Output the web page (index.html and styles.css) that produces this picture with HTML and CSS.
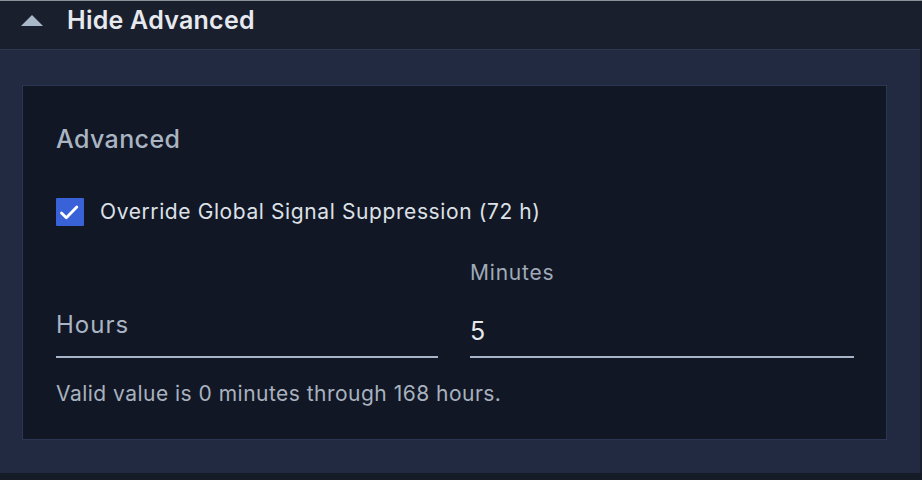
FILE: index.html
```html
<!DOCTYPE html>
<html lang="en">
<head>
<meta charset="utf-8">
<title>Hide Advanced</title>
<link rel="stylesheet" href="styles.css">
</head>
<body>
<div class="page">
  <header class="toggle">
    <svg class="caret" width="22" height="11" viewBox="0 0 22 11" aria-hidden="true"><path d="M11 0 L22 11 L0 11 Z" fill="#a9b8c8"/></svg>
    <span class="toggle-label">Hide Advanced</span>
  </header>
  <section class="panel">
    <div class="card">
      <h2 class="card-title">Advanced</h2>
      <label class="check-row">
        <span class="checkbox">
          <svg width="28" height="28" viewBox="0 0 28 28" aria-hidden="true"><path d="M5.5 15 L10.3 19.8 L20.8 9" fill="none" stroke="#ffffff" stroke-width="2.8" stroke-linecap="round" stroke-linejoin="round"/></svg>
        </span>
        <span class="check-label">Override Global Signal Suppression (72 h)</span>
      </label>
      <div class="fields">
        <div class="field">
          <div class="field-label-top"></div>
          <div class="field-input placeholder">Hours</div>
        </div>
        <div class="field">
          <div class="field-label-top">Minutes</div>
          <div class="field-input">5</div>
        </div>
      </div>
      <p class="helper">Valid value is 0 minutes through 168 hours.</p>
    </div>
  </section>
</div>
</body>
</html>
```
FILE: styles.css
```css
html, body {
  margin: 0;
  padding: 0;
}
body {
  background: #161b28;
  font-family: Inter, "Noto Sans", sans-serif;
  width: 922px;
  height: 480px;
  overflow: hidden;
}
.page {
  background: #1a1f2d;
  border-top: 1px solid #8c9099;
  width: 922px;
}
.toggle {
  height: 48px;
  display: flex;
  align-items: flex-start;
  padding-left: 21px;
  box-sizing: border-box;
}
.caret {
  display: block;
  margin-top: 14px;
}
.toggle-label {
  margin-left: 24px;
  margin-top: 4px;
  color: #e6e9ee;
  font-size: 25px;
  line-height: 30px;
  font-weight: 600;
  letter-spacing: 0.25px;
}
.panel {
  width: 920px;
  box-sizing: border-box;
  background: #212a41;
  border-top: 1px solid #2c3852;
  padding: 35px 33px 33px 22px;
}
.card {
  background: #121726;
  border: 1px solid #2b3752;
  padding: 38px 32px 0 33px;
  height: 355px;
  box-sizing: border-box;
}
.card-title {
  margin: 0;
  font-size: 25px;
  font-weight: 500;
  letter-spacing: 0.4px;
  color: #a9b5c3;
  line-height: 30px;
}
.check-row {
  display: flex;
  align-items: center;
  margin-top: 44px;
  height: 28px;
}
.checkbox {
  width: 28px;
  height: 28px;
  flex: none;
  background: #3a62d8;
  display: flex;
  align-items: center;
  justify-content: center;
  border-radius: 1px;
}
.checkbox svg {
  display: block;
}
.check-label {
  margin-left: 16px;
  font-size: 21px;
  line-height: 28px;
  letter-spacing: 0.6px;
  color: #dde1e7;
}
.fields {
  display: grid;
  grid-template-columns: 382px 384px;
  column-gap: 32px;
  margin-top: 35px;
}
.field-label-top {
  height: 24px;
  font-size: 21px;
  letter-spacing: 0.8px;
  color: #a0aab8;
  line-height: 24px;
}
.field-input {
  margin-top: 31px;
  font-size: 25px;
  color: #e6e8ec;
  line-height: 30px;
  padding-bottom: 10px;
  border-bottom: 2px solid #a8b4c8;
}
.field-input.placeholder {
  margin-top: 25px;
  padding-bottom: 16px;
  font-size: 24px;
  letter-spacing: 1px;
  color: #a9b5c4;
}
.helper {
  margin: 23px 0 0;
  font-size: 21px;
  line-height: 26px;
  letter-spacing: 0.48px;
  color: #a8b2be;
}
```
